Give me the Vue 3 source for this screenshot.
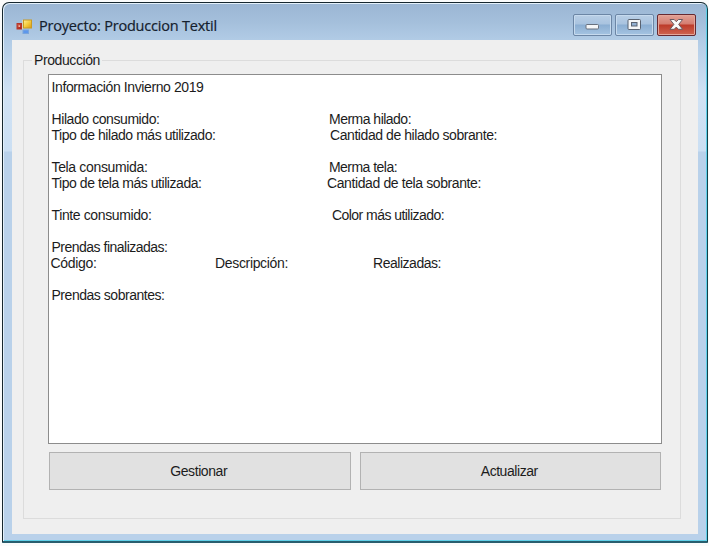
<script setup>
const rows = [
  [{ t: 'Información Invierno 2019', x: 3, w: 152 }],
  [],
  [{ t: 'Hilado consumido:', x: 3, w: 108 }, { t: 'Merma hilado:', x: 280, w: 82 }],
  [{ t: 'Tipo de hilado más utilizado:', x: 3, w: 164 }, { t: 'Cantidad de hilado sobrante:', x: 281, w: 167 }],
  [],
  [{ t: 'Tela consumida:', x: 3, w: 96 }, { t: 'Merma tela:', x: 280, w: 68 }],
  [{ t: 'Tipo de tela más utilizada:', x: 3, w: 150 }, { t: 'Cantidad de tela sobrante:', x: 278, w: 154 }],
  [],
  [{ t: 'Tinte consumido:', x: 3, w: 100 }, { t: 'Color más utilizado:', x: 283, w: 112 }],
  [],
  [{ t: 'Prendas finalizadas:', x: 3, w: 116 }],
  [{ t: 'Código:', x: 2, w: 46 }, { t: 'Descripción:', x: 166, w: 73 }, { t: 'Realizadas:', x: 324, w: 68 }],
  [],
  [{ t: 'Prendas sobrantes:', x: 3, w: 113 }]
]

// Tracks the text so that it spans the given width.
const vFit = {
  mounted(el, { value }) {
    const natural = el.getBoundingClientRect().width
    el.style.letterSpacing = (value - natural) / el.textContent.length + 'px'
  }
}

function columns(row) {
  return row.map((c, i) => (i + 1 < row.length ? row[i + 1].x - c.x : 300) + 'px').join(' ')
}
</script>

<template>
  <div class="screen">
    <div class="window">
      <header class="titlebar">
        <svg class="app-icon" width="17" height="17" viewBox="0 0 17 17">
          <defs>
            <linearGradient id="gold" x2="1" y2="1"><stop stop-color="#fff09a" /><stop offset=".5" stop-color="#f5cc3c" /><stop offset="1" stop-color="#d79a18" /></linearGradient>
            <linearGradient id="red" x2="1" y2="1"><stop stop-color="#d9604c" /><stop offset="1" stop-color="#a3160f" /></linearGradient>
          </defs>
          <rect x="6" y="2" width="1.5" height="9" fill="#d5d3c4" />
          <rect x="7.5" y="2" width="8" height="8" fill="url(#gold)" stroke="#c99a22" />
          <rect x="1" y="5.5" width="4.5" height="5.5" fill="url(#red)" stroke="#b4362a" />
          <rect x="2.5" y="7.2" width="1.6" height="1.8" fill="#efb3a3" />
          <rect x="7" y="12" width="5.5" height="3.5" fill="#5c97ec" stroke="#79a5dc" />
        </svg>
        <span class="title"><span v-fit="178">Proyecto: Produccion Textil</span></span>
        <div class="controls">
          <button class="ctl" aria-label="Minimizar">
            <svg width="37" height="20" viewBox="0 0 37 20"><rect x="12" y="9.5" width="12.5" height="4.5" rx="1" fill="#f4f6f8" stroke="#68717f" /></svg>
          </button>
          <button class="ctl" aria-label="Maximizar">
            <svg width="37" height="20" viewBox="0 0 37 20"><rect x="12" y="4.5" width="12.5" height="10" rx="1" fill="#f4f6f8" stroke="#596270" /><rect x="15.5" y="7.5" width="5.5" height="3.5" fill="#91b0d2" stroke="#596270" /></svg>
          </button>
          <button class="ctl close" aria-label="Cerrar">
            <svg width="37" height="20" viewBox="0 0 37 20"><path d="M12 4.5h4.2l2.1 2.2 2.1-2.2h4.2l-3.9 4.9 3.9 4.9h-4.2l-2.1-2.2-2.1 2.2H12l3.9-4.9z" fill="#fafafa" stroke="#675a62" stroke-linejoin="round" /></svg>
          </button>
        </div>
      </header>
      <main class="client">
        <fieldset class="group">
          <legend><span v-fit="66">Producción</span></legend>
          <div class="list">
            <div v-for="(row, i) in rows" :key="i" class="row" :style="{ gridTemplateColumns: columns(row), paddingLeft: (row[0]?.x ?? 0) + 'px' }">
              <span v-for="cell in row" :key="cell.t" class="cell"><span v-fit="cell.w">{{ cell.t }}</span></span>
            </div>
          </div>
          <div class="actions">
            <button class="btn"><span v-fit="57">Gestionar</span></button>
            <button class="btn"><span v-fit="57">Actualizar</span></button>
          </div>
        </fieldset>
      </main>
    </div>
  </div>
</template>

<style>
body { background: #fafbfb; overflow: hidden; }
</style>

<style scoped>
* { box-sizing: border-box; }
.screen {
  width: 709px;
  height: 546px;
  padding: 2px 1px 3px 2px;
  font-family: "Liberation Sans", Arial, sans-serif;
  font-size: 14px;
  color: #1c1c1c;
}
.window {
  width: 706px;
  height: 541px;
  padding: 0 9px 7px 9px;
  border: 1px solid #16272e;
  border-bottom: 2px solid #285e6e;
  border-right-color: #124049;
  border-radius: 7px 7px 1px 1px;
  background: linear-gradient(#9bb6d3 0, #a5c0dc 20px, #b2cce6 38px, #d0e2f4 90px, #cbdff3 148px, #b9d1ea 149px);
  box-shadow: inset 1px 1px 0 #e3f0fa, inset -1px -1px 0 #60d0e9;
}
.titlebar {
  display: flex;
  height: 37px;
  padding-left: 4px;
}
.app-icon { margin-top: 15px; flex: none; }
.title {
  margin: 13px 0 0 6px;
  font-family: "Open Sans", "Noto Sans", sans-serif;
  font-size: 14.5px;
  line-height: 20px;
  color: #14202d;
  -webkit-text-stroke: 0.2px #14202d;
  white-space: nowrap;
}
.controls {
  display: flex;
  gap: 3px;
  margin: 11px 2px 0 auto;
}
.ctl {
  width: 39px;
  height: 22px;
  padding: 0;
  border: 1px solid #6c86a5;
  border-radius: 2px;
  background: linear-gradient(#b9cfe6 0, #a9c3df 45%, #8baed2 50%, #a5c4e2 100%);
  box-shadow: inset 0 0 0 1px #c6daee;
}
.ctl svg { display: block; }
.close {
  border-color: #672931;
  background: linear-gradient(#e2a196 0, #d47d70 45%, #bd3b2a 50%, #ce6551 100%);
  box-shadow: inset 0 0 0 1px #e4a69a;
}
.client {
  height: 494px;
  padding: 12px 17px 15px 11px;
  background: #efefef;
}
.group {
  height: 467px;
  margin: 0;
  padding: 5px 19px 0 24px;
  border: 1px solid #dcdcdc;
  min-width: 0;
}
legend {
  height: 17px;
  margin-left: -16px;
  padding: 0 2px;
  line-height: 17px;
}
legend span, .cell span, .btn span, .title span { display: inline-block; white-space: nowrap; }
.list {
  width: 614px;
  height: 370px;
  padding-top: 4px;
  border: 1px solid #8c8c8c;
  background: #fff;
}
.row {
  display: grid;
  height: 16px;
  line-height: 16px;
}
.cell { white-space: nowrap; }
.row > .cell:first-child { margin-left: -0.5px; }
.actions {
  display: flex;
  gap: 9px;
  width: 612px;
  margin: 8px 0 0 1px;
}
.btn {
  flex: 1;
  height: 38px;
  padding: 0 2px 1px 0;
  border: 1px solid #b2b2b2;
  background: #e1e1e1;
  font: inherit;
  color: inherit;
}
</style>
